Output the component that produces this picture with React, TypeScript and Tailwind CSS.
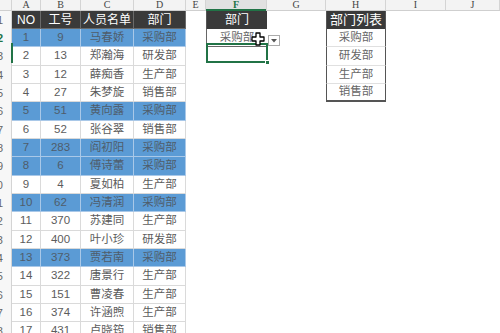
import React from "react";

type Row = { no: number; id: number; name: string; dept: string; hl?: boolean };

const rows: Row[] = [
  { no: 1, id: 9, name: "马春娇", dept: "采购部", hl: true },
  { no: 2, id: 13, name: "郑瀚海", dept: "研发部" },
  { no: 3, id: 12, name: "薛痴香", dept: "生产部" },
  { no: 4, id: 27, name: "朱梦旋", dept: "销售部" },
  { no: 5, id: 51, name: "黄向露", dept: "采购部", hl: true },
  { no: 6, id: 52, name: "张谷翠", dept: "销售部" },
  { no: 7, id: 283, name: "阎初阳", dept: "采购部", hl: true },
  { no: 8, id: 6, name: "傅诗蕾", dept: "采购部", hl: true },
  { no: 9, id: 4, name: "夏如柏", dept: "生产部" },
  { no: 10, id: 62, name: "冯清润", dept: "采购部", hl: true },
  { no: 11, id: 370, name: "苏建同", dept: "生产部" },
  { no: 12, id: 400, name: "叶小珍", dept: "研发部" },
  { no: 13, id: 373, name: "贾若南", dept: "采购部", hl: true },
  { no: 14, id: 322, name: "唐景行", dept: "生产部" },
  { no: 15, id: 151, name: "曹凌春", dept: "生产部" },
  { no: 16, id: 374, name: "许涵煦", dept: "生产部" },
  { no: 17, id: 431, name: "卢晓筠", dept: "销售部" },
];

const deptList = ["采购部", "研发部", "生产部", "销售部"];

// 列幅: 行番号, A, B, C, D, E, F, G, H, I, J
const colW = ["w-[12px]", "w-[29px]", "w-[40px]", "w-[53px]", "w-[52px]", "w-[20px]", "w-[61px]", "w-[59px]", "w-[60px]", "w-[60px]", "w-[54px]"];
const letters = ["", "A", "B", "C", "D", "E", "F", "G", "H", "I", "J"];
// 18/18/19 の繰り返しで Excel の行高に合わせる
const rowH = ["h-[18px]", "h-[18px]", "h-[19px]"];

const cellFont = "font-['Liberation_Sans','Noto_Sans_CJK_SC',sans-serif]";

const RowNum: React.FC<{ n: number; active?: boolean }> = ({ n, active }) => (
  <div className={`${colW[0]} shrink-0 overflow-hidden border-r border-[#d4d4d4] bg-[#f7f7f7] flex items-center justify-end pr-[8px] text-[11px] ${cellFont} ${active ? "text-[#217346] font-bold" : "text-[#666]"}`}>
    <span className="whitespace-nowrap">{n}</span>
  </div>
);

const Cell: React.FC<{ w: string; cls?: string; children?: React.ReactNode }> = ({ w, cls = "", children }) => (
  <div className={`${w} shrink-0 flex items-center justify-center whitespace-nowrap overflow-hidden ${cls}`}>{children}</div>
);

export default function App() {
  const dark = "bg-[#3a3a3a] text-white text-[12px] border-r border-b border-[#6a6a6a]";
  const data = (hl?: boolean) =>
    `text-[11.5px] border-r border-b ${hl ? "bg-[#5b9bd5] text-[#4f5d6b] border-[#a9c8e8]" : "bg-white text-[#5c5c5c] border-[#dadada]"}`;

  return (
    <div className={`relative w-[500px] h-[333px] overflow-hidden bg-white ${cellFont}`}>
      {/* 列見出し */}
      <div className="flex h-[11px] bg-[#f3f3f3] border-b border-[#cfcfcf]">
        {letters.map((l, i) => (
          <div
            key={i}
            className={`${colW[i]} relative shrink-0 flex items-center justify-center text-[10px] leading-none font-['Liberation_Serif',serif] border-r border-[#d4d4d4] ${
              l === "F" ? "bg-[#e1e1e1] text-[#217346] font-bold" : "text-[#444]"
            }`}
          >
            {l}
            {l === "F" && <div className="absolute left-0 right-0 bottom-[-1px] h-[2px] bg-[#217346]" />}
          </div>
        ))}
      </div>

      {/* 見出し行 */}
      <div className="flex h-[18px]">
        <RowNum n={1} />
        <Cell w={colW[1]} cls={dark}>NO</Cell>
        <Cell w={colW[2]} cls={dark}>工号</Cell>
        <Cell w={colW[3]} cls={dark}>人员名单</Cell>
        <Cell w={colW[4]} cls={dark}>部门</Cell>
        <Cell w={colW[5]} />
        <Cell w={colW[6]} cls="bg-[#3a3a3a] text-white text-[12px] border-l border-[#555]">部门</Cell>
        <Cell w={colW[7]} />
        <Cell w={colW[8]} cls="bg-[#3a3a3a] text-white text-[13px] border-x border-[#555]">部门列表</Cell>
      </div>

      {rows.map((r, i) => {
        const listItem = deptList[i];
        return (
          <div key={r.no} className={`flex ${rowH[(i + 1) % 3]}`}>
            <RowNum n={r.no + 1} active={r.no === 1} />
            <Cell w={colW[1]} cls={data(r.hl)}>{r.no}</Cell>
            <Cell w={colW[2]} cls={data(r.hl)}>{r.id}</Cell>
            <Cell w={colW[3]} cls={data(r.hl)}>{r.name}</Cell>
            <Cell w={colW[4]} cls={data(r.hl)}>{r.dept}</Cell>
            <Cell w={colW[5]} />
            {i === 0 ? (
              <Cell w={colW[6]} cls="text-[11.5px] text-[#666] border-l border-b border-[#666] bg-white">采购部</Cell>
            ) : (
              <Cell w={colW[6]} />
            )}
            <Cell w={colW[7]} />
            {listItem ? (
              <Cell
                w={colW[8]}
                cls={`text-[11.5px] text-[#666] border-x border-[#555] ${i === deptList.length - 1 ? "border-b-2 border-b-[#555]" : "border-b border-b-[#e0e0e0]"}`}
              >
                {listItem}
              </Cell>
            ) : (
              <Cell w={colW[8]} />
            )}
          </div>
        );
      })}

      {/* 選択中の行番号の緑マーク */}
      <div className="absolute left-[11px] top-[43px] w-[2px] h-[20px] bg-[#217346]" />

      {/* 選択セル F3 */}
      <div className="absolute left-[206px] top-[43px] w-[62px] h-[20px] border-2 border-[#217346]">
        <div className="absolute right-[-4px] bottom-[-4px] w-[5px] h-[5px] bg-[#217346] border border-white" />
      </div>

      {/* ドロップダウンボタン */}
      <div className="absolute left-[268px] top-[35px] w-[12px] h-[11px] bg-white border border-[#ababab] flex items-center justify-center">
        <svg width="6" height="4" viewBox="0 0 6 4">
          <path d="M0 0 L6 0 L3 3.5 Z" fill="#555" />
        </svg>
      </div>

      {/* マウスカーソル(白い十字) */}
      <svg className="absolute left-[251px] top-[32px]" width="14" height="14" viewBox="0 0 14 14">
        <path d="M5 1 H9 V5 H13 V9 H9 V13 H5 V9 H1 V5 H5 Z" fill="#fff" stroke="#000" strokeWidth="1.3" strokeLinejoin="round" />
      </svg>
    </div>
  );
}
